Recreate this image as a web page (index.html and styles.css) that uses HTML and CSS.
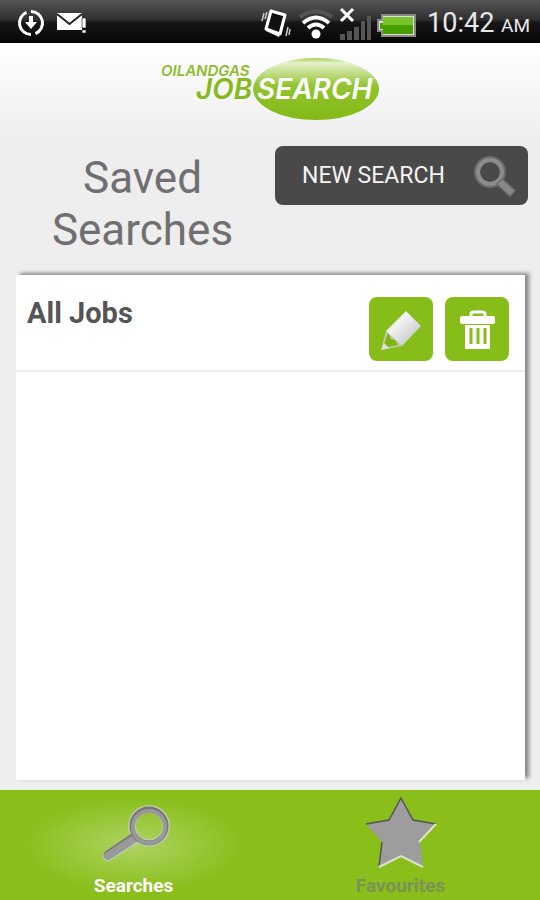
FILE: index.html
```html
<!DOCTYPE html>
<html lang="en">
<head>
<meta charset="utf-8">
<meta name="viewport" content="width=device-width, initial-scale=1">
<title>Saved Searches</title>
<link rel="stylesheet" href="styles.css">
</head>
<body>
<div class="status">
  <svg width="28" height="28" viewBox="0 0 28 28" fill="none" stroke="#fff" stroke-width="3" aria-hidden="true">
    <path d="M9.500 3.400A11.500 11.500 0 0 0 14 25.500M18.500 24.600A11.500 11.500 0 0 0 14 2.500"/>
    <path d="M14 7v8" stroke-width="4"/><path d="M8 13h12l-6 7z" fill="#fff" stroke="none"/>
  </svg>
  <svg class="mail" width="32" height="24" viewBox="0 0 32 24" aria-hidden="true">
    <path d="M1 2h25v17H1z" fill="#fff"/><path d="M1 3l12.500 10L26 3" fill="none" stroke="#222" stroke-width="2"/>
    <path d="M26 7h4v10h-4zM26 19h4v3h-4z" fill="#fff" stroke="#222" stroke-width=".7"/>
  </svg>
  <svg class="system" width="156" height="40" viewBox="0 0 156 40" aria-hidden="true">
    <path d="M10 8l14 4-5 19-14-5z" fill="#111" stroke="#fff" stroke-width="3" stroke-linejoin="round"/>
    <path d="M5 25l14 5-1 4-13-6z" fill="#fff"/>
    <path d="M1 18l2-8M4 16l2-7M25 33l2-9M28 32l1-6" stroke="#ccc" stroke-width="1.500"/>
    <g fill="none" stroke="#fff" stroke-width="4">
      <path d="M39 14Q55 3 71 14" stroke="#555"/><path d="M42 20Q55 9 68 20"/><path d="M47 25Q55 18 63 25"/>
    </g>
    <circle cx="55" cy="31" r="4.500" fill="#fff"/>
    <path d="M79 31h5v6h-5zM86 28h5v9h-5zM93 24h5v13h-5zM100 18h4v19h-4zM106 13h4v24h-4z" fill="#555"/>
    <path d="M80 6l12 12M92 6L80 18" stroke="#fff" stroke-width="3"/>
    <path d="M121 12h33v21h-33v-5h-4v-11h4z" fill="#dedede" stroke="#888" stroke-width="2"/>
    <path d="M122 14h30v17h-30v-5h-3v-6h3z" fill="#46a000"/><path d="M122 14h30v8h-30z" fill="#79c52c"/>
  </svg>
  <time class="clock">10:42 <small>AM</small></time>
</div>
<header class="brand">
  <svg class="logo" width="220" height="64" viewBox="0 0 220 64" role="img" aria-label="Oil and Gas Job Search">
    <defs><linearGradient id="oval" x1="0" y1="0" x2="0" y2="1">
      <stop offset="0" stop-color="#a8cf52"/><stop offset=".08" stop-color="#e6f2cc"/><stop offset=".45" stop-color="#91c42f"/><stop offset="1" stop-color="#83b915"/>
    </linearGradient></defs>
    <ellipse cx="156" cy="32" rx="63" ry="31" fill="url(#oval)"/>
    <text class="logo-small" x="1" y="19">OILANDGAS</text>
    <text class="logo-job" x="36" y="42">JOB</text>
    <text class="logo-search" x="97" y="42">SEARCH</text>
  </svg>
</header>
<main>
  <div class="heading">
    <h1>Saved Searches</h1>
    <button class="new" type="button"><span>NEW SEARCH</span>
      <svg width="44" height="44" viewBox="0 0 44 44" fill="none" aria-hidden="true">
        <circle cx="18" cy="18" r="13" stroke="#6c6c6c" stroke-width="6"/><circle cx="18" cy="18" r="12" stroke="#8c8c8c" stroke-width="4"/>
        <path d="M27 27l14 13" stroke="#6c6c6c" stroke-width="9"/><path d="M28 28l12 11" stroke="#888" stroke-width="6"/>
      </svg>
    </button>
  </div>
  <ul class="list">
    <li>
      <h2>All Jobs</h2>
      <button class="action" type="button" aria-label="Edit">
        <svg width="64" height="64" viewBox="0 0 64 64" aria-hidden="true">
          <defs><linearGradient id="pen" x1="0" y1="0" x2="1" y2="1"><stop stop-color="#cfcfcf"/><stop offset=".35" stop-color="#f4f4f4"/><stop offset=".6" stop-color="#dcdcdc"/><stop offset="1" stop-color="#bbb"/></linearGradient></defs>
          <path d="M37 14l15 15-19 20-16-15z" fill="url(#pen)"/>
          <path d="M17 34l-5 19 21-4-16-15z" fill="#c3cbb6"/>
          <path d="M19 36l-4 11 4 3 10-2-3-5-4-1z" fill="#7eb40e"/><path d="M12 53l3-7 5 5z" fill="#ddd"/>
        </svg>
      </button>
      <button class="action" type="button" aria-label="Delete">
        <svg width="64" height="64" viewBox="0 0 64 64" aria-hidden="true">
          <path d="M26 20v-3q0-2 3-2h8q3 0 3 2v3" fill="none" stroke="#fff" stroke-width="3"/>
          <rect x="15" y="19" width="35" height="8" rx="2" fill="#fff"/>
          <path d="M20 28h25v24H20z" fill="#fff"/>
          <path d="M26 31v16M33 31v16M40 31v16" stroke="#86bd19" stroke-width="3"/>
        </svg>
      </button>
    </li>
  </ul>
</main>
<nav class="tabs">
  <a class="tab active" href="#searches">
    <svg width="72" height="76" viewBox="0 0 72 76" fill="none" aria-hidden="true">
      <path d="M36 47L10 64" stroke="#bdcda6" stroke-width="11" stroke-linecap="round"/>
      <circle cx="51" cy="34" r="17" stroke="#bdcda6" stroke-width="8"/>
      <path d="M35 46L10 63" stroke="#777" stroke-width="9" stroke-linecap="round"/>
      <path d="M36 47L10 64" stroke="#999" stroke-width="8" stroke-linecap="round"/>
      <circle cx="51" cy="34" r="17" stroke="#777" stroke-width="5"/><circle cx="51" cy="35" r="16" stroke="#999" stroke-width="4"/>
    </svg>
    <span>Searches</span>
  </a>
  <a class="tab" href="#favourites">
    <svg width="72" height="76" viewBox="0 0 72 76" aria-hidden="true">
      <path d="M36 6l12 22 23 4-16 18 3 25-22-11-22 11 3-25L1 32l23-4z" fill="#9d9d9d"/>
      <path d="M1 32l23-4L36 6l12 22 23 4M17 50l-3 24" fill="none" stroke="#555" stroke-width="1.500"/>
      <path d="M14 75l22-11 22 11M71 32L54 50" fill="none" stroke="#dce5cc" stroke-width="2"/>
    </svg>
    <span>Favourites</span>
  </a>
</nav>
</body>
</html>
```
FILE: styles.css
```css
* { box-sizing: border-box; }
body {
  margin: 0;
  min-height: 100vh;
  display: flex;
  flex-direction: column;
  background: #eee;
  color: #555;
  font-family: Roboto, sans-serif;
}
button { border: 0; padding: 0; font: inherit; cursor: pointer; }
svg { display: block; flex: none; }

.status {
  height: 43px;
  padding: 2px 10px 0 17px;
  display: flex;
  align-items: center;
  background: linear-gradient(#555, #303030 45%, #171717 52%, #080808 94%, #000);
  color: #e8e8e8;
}
.mail { margin-left: 11px; }
.system { margin-left: auto; }
.clock { margin-left: 10px; padding-top: 4px; font-size: 27px; line-height: 40px; white-space: nowrap; }
.clock small { font-size: 19px; }

.brand {
  height: 97px;
  padding-top: 14px;
  background: linear-gradient(#fff, #eee);
}
.logo { margin: 0 auto; font-family: Inter, sans-serif; font-style: italic; }
.logo-small { font-size: 15px; font-weight: 600; fill: #8dbd2d; }
.logo-job { font-size: 28px; font-weight: 600; fill: #86b91d; }
.logo-search { font-size: 28px; font-weight: 600; fill: #fff; }

main {
  flex: 1;
  display: flex;
  flex-direction: column;
  padding: 6px 12px 10px 16px;
}
.heading {
  display: grid;
  grid-template-columns: 1fr 1fr;
  gap: 6px;
  align-items: start;
}
h1 {
  margin: 0;
  padding: 6px 24px 19px;
  font-size: 44px;
  line-height: 52px;
  font-weight: 400;
  text-align: center;
  color: #707070;
}
.new {
  height: 59px;
  padding: 0 12px 0 27px;
  display: flex;
  align-items: center;
  justify-content: space-between;
  border-radius: 8px;
  background: #494949;
  color: #f4f4f4;
  font-size: 23px;
}
.list {
  flex: 1;
  margin: 0 3px 0 0;
  padding: 0;
  list-style: none;
  background: #fff;
  box-shadow: 4px -2px 4px #888;
}
.list li {
  display: flex;
  align-items: flex-start;
  gap: 12px;
  padding: 22px 16px 9px 11px;
  border-bottom: 2px solid #eee;
}
h2 {
  margin: 0;
  flex: 1;
  font-size: 29px;
  line-height: 32px;
  font-weight: 700;
}
.action { border-radius: 8px; background: #86bd19; }

.tabs {
  height: 110px;
  padding-right: 6px;
  display: grid;
  grid-template-columns: 1fr 1fr;
  background: #89be1b;
}
.tab {
  display: flex;
  flex-direction: column;
  align-items: center;
  padding-top: 2px;
  color: #7c9255;
  font-size: 19px;
  line-height: 24px;
  font-weight: 700;
  text-decoration: none;
}
.tab span { margin-top: 6px; }
.active {
  color: #fff;
  background: radial-gradient(ellipse 42% 44% at 50% 50%, #aed361, #89be1b);
}
```
